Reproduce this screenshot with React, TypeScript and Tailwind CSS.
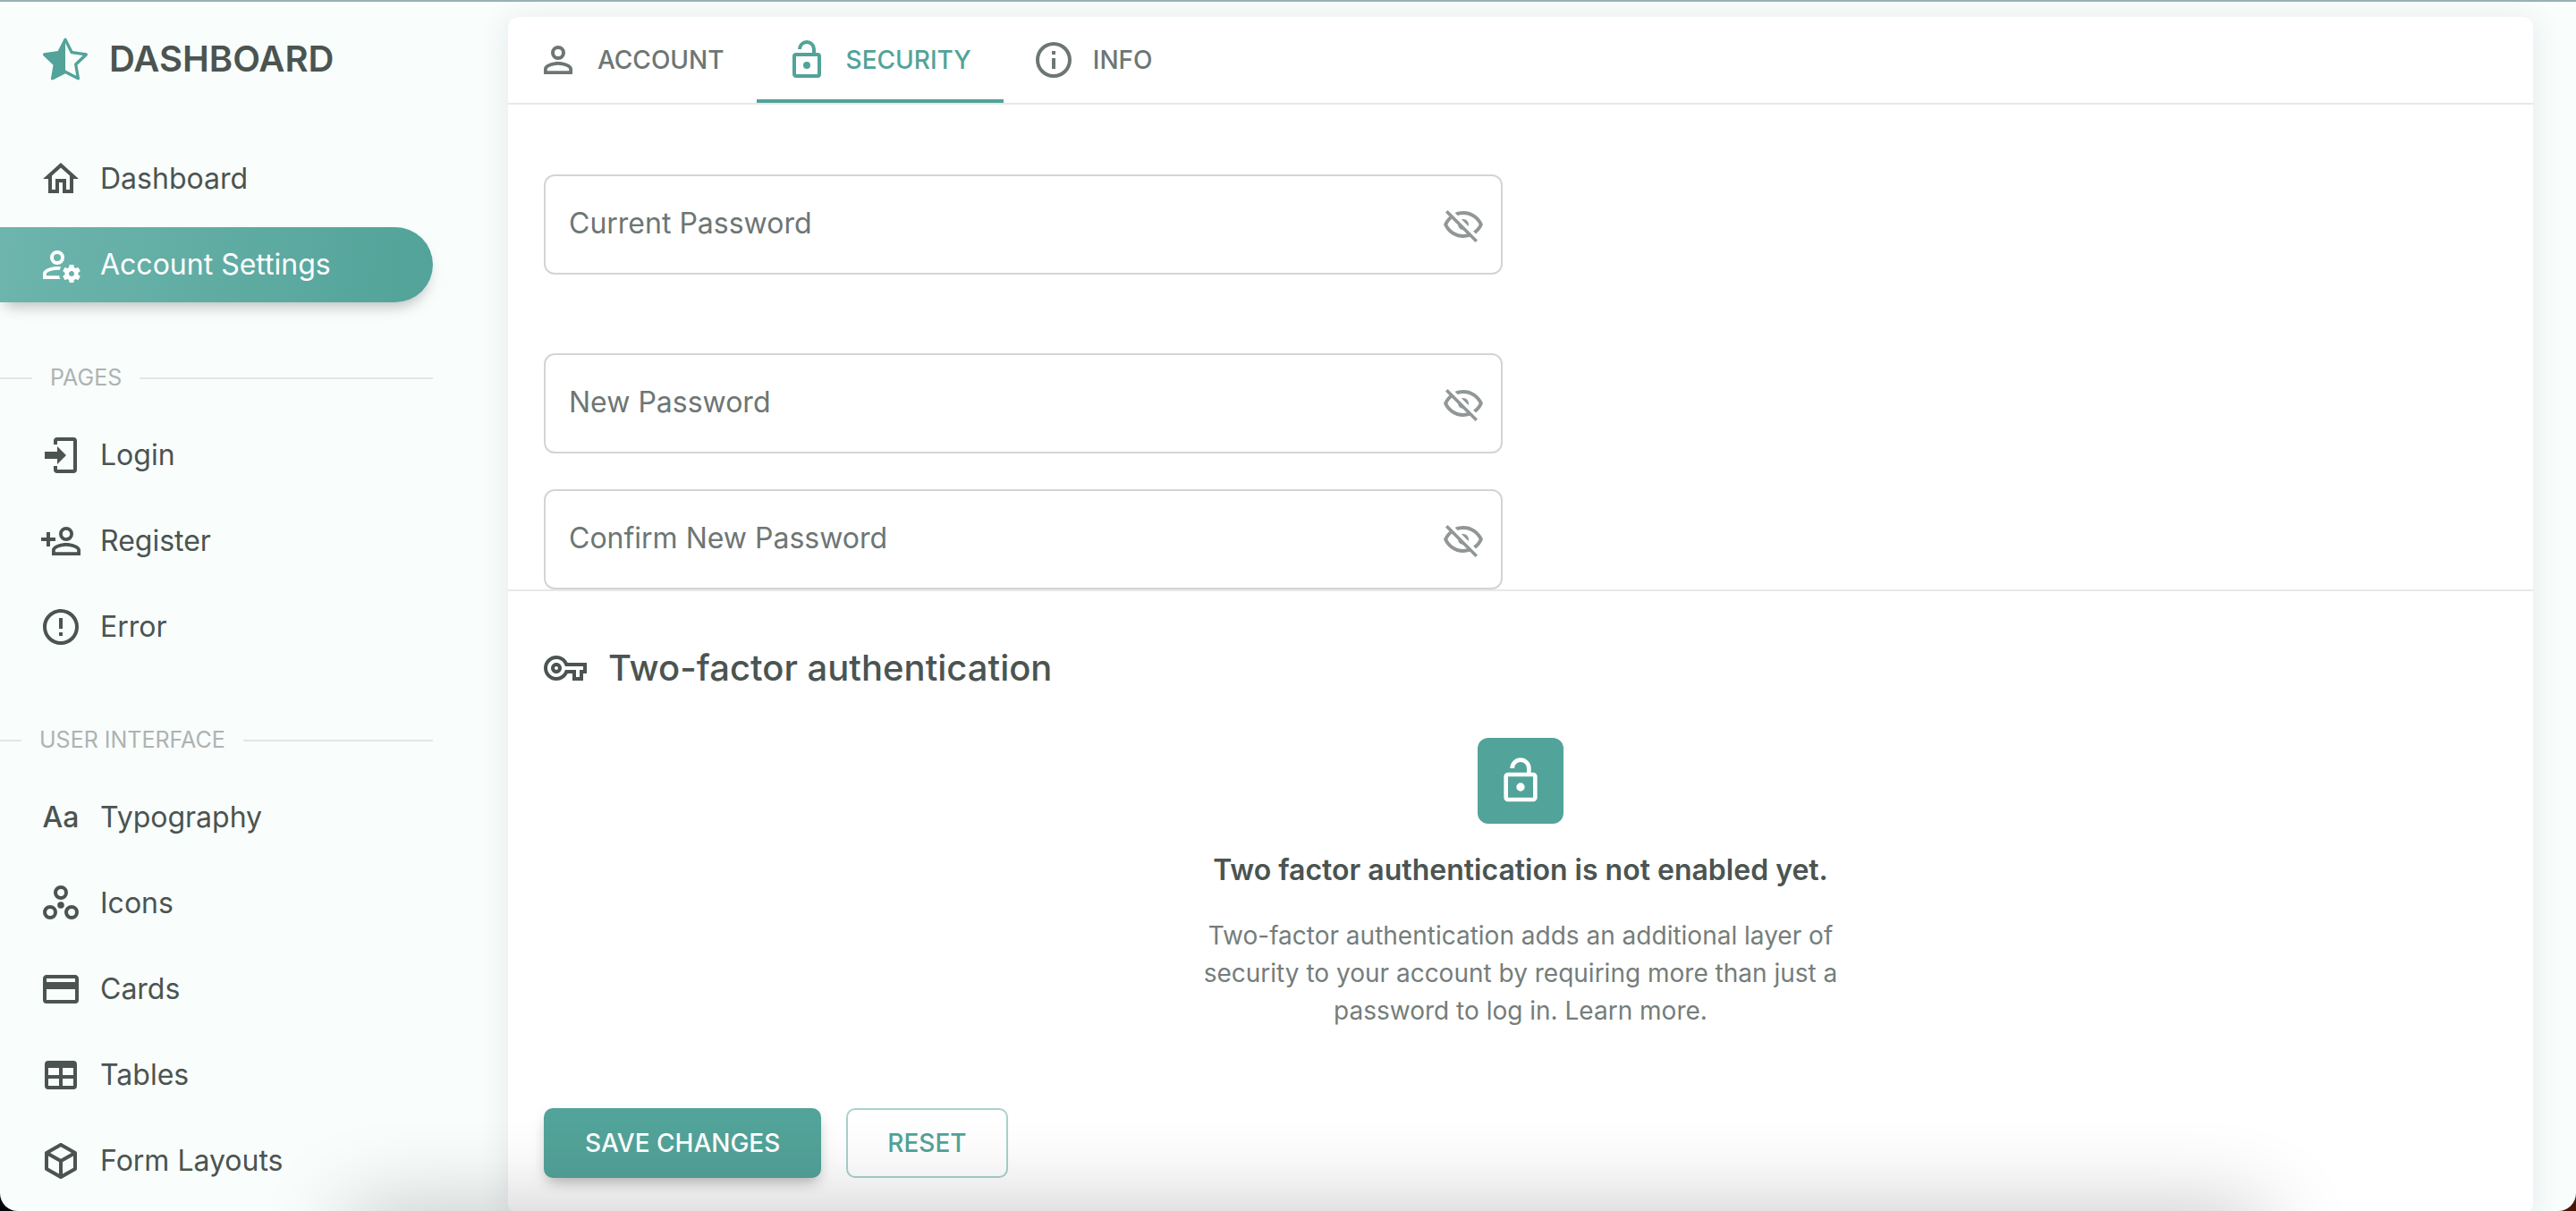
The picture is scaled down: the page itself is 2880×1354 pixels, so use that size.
import { useState } from "react";
import { BsStarHalf } from "react-icons/bs";

const ICONS = {
  home: "M12 5.69L17 10.19V18H15V12H9V18H7V10.19L12 5.69M12 3L2 12H5V20H11V14H13V20H19V12H22",
  accountCog:
    "M10 4A4 4 0 0 0 6 8A4 4 0 0 0 10 12A4 4 0 0 0 14 8A4 4 0 0 0 10 4M10 6A2 2 0 0 1 12 8A2 2 0 0 1 10 10A2 2 0 0 1 8 8A2 2 0 0 1 10 6M17 12C16.84 12 16.76 12.08 16.76 12.24L16.5 13.5C16.28 13.68 15.96 13.84 15.72 14L14.44 13.5C14.36 13.5 14.2 13.5 14.12 13.6L13.16 15.36C13.08 15.44 13.08 15.6 13.24 15.68L14.28 16.5V17.5L13.24 18.32C13.16 18.4 13.08 18.56 13.16 18.64L14.12 20.4C14.2 20.5 14.36 20.5 14.44 20.5L15.72 20C15.96 20.16 16.28 20.32 16.5 20.5L16.76 21.76C16.76 21.92 16.84 22 17 22H19C19.08 22 19.24 21.92 19.24 21.76L19.4 20.5C19.72 20.32 20.04 20.16 20.28 20L21.5 20.5C21.64 20.5 21.8 20.5 21.8 20.4L22.84 18.64C22.92 18.56 22.84 18.4 22.76 18.32L21.72 17.5V16.5L22.76 15.68C22.84 15.6 22.92 15.44 22.84 15.36L21.8 13.6C21.8 13.5 21.64 13.5 21.5 13.5L20.28 14C20.04 13.84 19.72 13.68 19.4 13.5L19.24 12.24C19.24 12.08 19.08 12 19 12H17M10 13C7.33 13 2 14.33 2 17V20H11.67C11.39 19.41 11.19 18.77 11.09 18.1H3.9V17C3.9 16.36 7.03 14.9 10 14.9C10.43 14.9 10.87 14.94 11.3 15C11.5 14.36 11.77 13.76 12.12 13.21C11.34 13.08 10.6 13 10 13M18.04 15.5C18.84 15.5 19.5 16.16 19.5 17.04C19.5 17.84 18.84 18.5 18.04 18.5C17.16 18.5 16.5 17.84 16.5 17.04C16.5 16.16 17.16 15.5 18.04 15.5Z",
  login:
    "M10,17V14H3V10H10V7L15,12L10,17M10,2H19A2,2 0 0,1 21,4V20A2,2 0 0,1 19,22H10A2,2 0 0,1 8,20V18H10V20H19V4H10V6H8V4A2,2 0 0,1 10,2Z",
  accountPlus:
    "M15,4A4,4 0 0,0 11,8A4,4 0 0,0 15,12A4,4 0 0,0 19,8A4,4 0 0,0 15,4M15,5.9C16.16,5.9 17.1,6.84 17.1,8C17.1,9.16 16.16,10.1 15,10.1A2.1,2.1 0 0,1 12.9,8A2.1,2.1 0 0,1 15,5.9M4,7V10H1V12H4V15H6V12H9V10H6V7H4M15,13C12.33,13 7,14.33 7,17V20H23V17C23,14.33 17.67,13 15,13M15,14.9C17.97,14.9 21.1,16.36 21.1,17V18.1H8.9V17C8.9,16.36 12,14.9 15,14.9Z",
  alert:
    "M11,15H13V17H11V15M11,7H13V13H11V7M12,2C6.47,2 2,6.5 2,12A10,10 0 0,0 12,22A10,10 0 0,0 22,12A10,10 0 0,0 12,2M12,20A8,8 0 0,1 4,12A8,8 0 0,1 12,4A8,8 0 0,1 20,12A8,8 0 0,1 12,20Z",
  circles:
    "M18,19C16.89,19 16,18.1 16,17C16,15.89 16.89,15 18,15A2,2 0 0,1 20,17A2,2 0 0,1 18,19M18,13A4,4 0 0,0 14,17A4,4 0 0,0 18,21A4,4 0 0,0 22,17A4,4 0 0,0 18,13M12,11.1A1.9,1.9 0 0,0 10.1,13A1.9,1.9 0 0,0 12,14.9A1.9,1.9 0 0,0 13.9,13A1.9,1.9 0 0,0 12,11.1M6,19C4.89,19 4,18.1 4,17C4,15.89 4.89,15 6,15A2,2 0 0,1 8,17A2,2 0 0,1 6,19M6,13A4,4 0 0,0 2,17A4,4 0 0,0 6,21A4,4 0 0,0 10,17A4,4 0 0,0 6,13M12,4A2,2 0 0,1 14,6A2,2 0 0,1 12,8C10.89,8 10,7.1 10,6C10,4.89 10.89,4 12,4M12,10A4,4 0 0,0 16,6A4,4 0 0,0 12,2A4,4 0 0,0 8,6A4,4 0 0,0 12,10Z",
  card: "M20,8H4V6H20M20,18H4V12H20M20,4H4C2.89,4 2,4.89 2,6V18A2,2 0 0,0 4,20H20A2,2 0 0,0 22,18V6C22,4.89 21.1,4 20,4Z",
  table:
    "M5,4H19A2,2 0 0,1 21,6V18A2,2 0 0,1 19,20H5A2,2 0 0,1 3,18V6A2,2 0 0,1 5,4M5,8V12H11V8H5M13,8V12H19V8H13M5,14V18H11V14H5M13,14V18H19V14H13Z",
  cube: "M21,16.5C21,16.88 20.79,17.21 20.47,17.38L12.57,21.82C12.41,21.94 12.21,22 12,22C11.79,22 11.59,21.94 11.43,21.82L3.53,17.38C3.21,17.21 3,16.88 3,16.5V7.5C3,7.12 3.21,6.79 3.53,6.62L11.43,2.18C11.59,2.06 11.79,2 12,2C12.21,2 12.41,2.06 12.57,2.18L20.47,6.62C20.79,6.79 21,7.12 21,7.5V16.5M12,4.15L6.04,7.5L12,10.85L17.96,7.5L12,4.15M5,15.91L11,19.29V12.58L5,9.21V15.91M19,15.91V9.21L13,12.58V19.29L19,15.91Z",
  account:
    "M12,4A4,4 0 0,1 16,8A4,4 0 0,1 12,12A4,4 0 0,1 8,8A4,4 0 0,1 12,4M12,6A2,2 0 0,0 10,8A2,2 0 0,0 12,10A2,2 0 0,0 14,8A2,2 0 0,0 12,6M12,13C14.67,13 20,14.33 20,17V20H4V17C4,14.33 9.33,13 12,13M12,14.9C9.03,14.9 5.9,16.36 5.9,17V18.1H18.1V17C18.1,16.36 14.97,14.9 12,14.9Z",
  lockOpen:
    "M18,20V10H6V20H18M18,8A2,2 0 0,1 20,10V20A2,2 0 0,1 18,22H6C4.89,22 4,21.1 4,20V10A2,2 0 0,1 6,8H15V6A3,3 0 0,0 12,3A3,3 0 0,0 9,6H7A5,5 0 0,1 12,1A5,5 0 0,1 17,6V8H18M12,17A2,2 0 0,1 10,15A2,2 0 0,1 12,13A2,2 0 0,1 14,15A2,2 0 0,1 12,17Z",
  info: "M11,9H13V7H11M12,20C7.59,20 4,16.41 4,12C4,7.59 7.59,4 12,4C16.41,4 20,7.59 20,12C20,16.41 16.41,20 12,20M12,2A10,10 0 0,0 2,12A10,10 0 0,0 12,22A10,10 0 0,0 22,12A10,10 0 0,0 12,2M11,17H13V11H11V17Z",
  eyeOff:
    "M2,5.27L3.28,4L20,20.72L18.73,22L15.65,18.92C14.5,19.3 13.28,19.5 12,19.5C7,19.5 2.73,16.39 1,12C1.69,10.24 2.79,8.69 4.19,7.46L2,5.27M12,9A3,3 0 0,1 15,12C15,12.35 14.94,12.69 14.83,13L11,9.17C11.31,9.06 11.65,9 12,9M12,4.5C17,4.5 21.27,7.61 23,12C22.18,14.08 20.79,15.88 19,17.19L17.58,15.76C18.94,14.82 20.06,13.54 20.82,12C19.17,8.64 15.76,6.5 12,6.5C10.91,6.5 9.84,6.68 8.84,7L7.3,5.47C8.74,4.85 10.33,4.5 12,4.5M3.18,12C4.83,15.36 8.24,17.5 12,17.5C12.69,17.5 13.37,17.43 14,17.29L11.72,15C10.29,14.85 9.15,13.71 9,12.28L5.6,8.87C4.61,9.72 3.78,10.78 3.18,12Z",
  key: "M22 19H16V15H13.32C12.18 17.42 9.72 19 7 19C3.14 19 0 15.86 0 12S3.14 5 7 5C9.72 5 12.17 6.58 13.32 9H24V15H22V19M18 17H20V13H22V11H11.94L11.71 10.33C11 8.34 9.11 7 7 7C4.24 7 2 9.24 2 12S4.24 17 7 17C9.11 17 11 15.66 11.71 13.67L11.94 13H18V17M7 15C5.35 15 4 13.65 4 12S5.35 9 7 9 10 10.35 10 12 8.65 15 7 15M7 11C6.45 11 6 11.45 6 12S6.45 13 7 13 8 12.55 8 12 7.55 11 7 11Z",
};

type IconName = keyof typeof ICONS;

function Icon({ name, className = "size-12" }: { name: IconName; className?: string }) {
  return (
    <svg viewBox="0 0 24 24" fill="currentColor" aria-hidden="true" className={`shrink-0 ${className}`}>
      <path d={ICONS[name]} />
    </svg>
  );
}

function NavItem({ icon, label, active = false }: { icon?: IconName; label: string; active?: boolean }) {
  return (
    <li className="mt-3">
      <a
        href="#"
        aria-current={active ? "page" : undefined}
        className={`flex h-[84px] items-center gap-5 rounded-r-full pl-11 text-[32px] ${
          active
            ? "bg-linear-98 from-[#6db5ad] to-[#52a399] text-white shadow-[0_10px_16px_-6px_rgba(58,65,62,0.35)]"
            : "text-[#4b5451]"
        }`}
      >
        {icon ? (
          <Icon name={icon} />
        ) : (
          <span aria-hidden="true" className="w-12 text-center font-medium">
            Aa
          </span>
        )}
        <span>{label}</span>
      </a>
    </li>
  );
}

function SectionTitle({ label, lead }: { label: string; lead: string }) {
  return (
    <div className="mt-16 mb-6 flex h-[41px] items-center gap-5 text-[25px] text-[#aeb3b2]">
      <span className={`h-0.5 bg-[#e2e6e5] ${lead}`} />
      <h2>{label}</h2>
      <span className="h-0.5 flex-1 bg-[#e2e6e5]" />
    </div>
  );
}

function Tab({
  icon,
  label,
  active,
  onSelect,
}: {
  icon: IconName;
  label: string;
  active: boolean;
  onSelect: () => void;
}) {
  return (
    <button
      type="button"
      role="tab"
      aria-selected={active}
      onClick={onSelect}
      className={`flex h-24 items-center gap-5 border-b-4 pt-1 pr-9 pl-8 text-[28px] font-medium ${
        active ? "border-[#52a399] text-[#52a399]" : "border-transparent text-[#6d7674]"
      }`}
    >
      <Icon name={icon} />
      {label}
    </button>
  );
}

function PasswordField({ id, label }: { id: string; label: string }) {
  const [shown, setShown] = useState(false);
  return (
    <div className="flex h-28 items-center rounded-xl border-2 border-[#d3d5d5] pr-[18px] pl-[26px] text-[32px]">
      <div className="grid h-full min-w-0 flex-1 items-center">
        <input
          id={id}
          type={shown ? "text" : "password"}
          placeholder=" "
          className="peer col-start-1 row-start-1 h-full w-full bg-transparent text-[#4b5451] outline-none"
        />
        <label
          htmlFor={id}
          className="pointer-events-none col-start-1 row-start-1 pb-0.5 text-[#6d7674] peer-not-placeholder-shown:invisible"
        >
          {label}
        </label>
      </div>
      <button
        type="button"
        aria-label={`Toggle ${label} visibility`}
        onClick={() => setShown(!shown)}
        className="text-[#909796]"
      >
        <Icon name="eyeOff" />
      </button>
    </div>
  );
}

const TABS: { icon: IconName; label: string }[] = [
  { icon: "account", label: "ACCOUNT" },
  { icon: "lockOpen", label: "SECURITY" },
  { icon: "info", label: "INFO" },
];

export default function App() {
  const [tab, setTab] = useState("SECURITY");

  return (
    <div className="h-screen bg-linear-to-r from-[#02060c] to-[#4a1408]">
      <div className="relative flex h-screen overflow-hidden rounded-b-[20px] border-t-2 border-[#99b1b4] bg-[#f9fdfc] font-['Inter',sans-serif] text-[#4b5451]">
        <aside className="w-[520px] shrink-0 pr-9">
          <div className="flex h-36 items-center gap-6 pb-4 pl-12">
            <BsStarHalf aria-hidden="true" className="size-[50px] shrink-0 text-[#52a399]" />
            <span className="text-[40px] font-semibold">DASHBOARD</span>
          </div>
          <nav aria-label="Main">
            <ul>
              <NavItem icon="home" label="Dashboard" />
              <NavItem icon="accountCog" label="Account Settings" active />
            </ul>
            <SectionTitle label="PAGES" lead="w-9" />
            <ul>
              <NavItem icon="login" label="Login" />
              <NavItem icon="accountPlus" label="Register" />
              <NavItem icon="alert" label="Error" />
            </ul>
            <SectionTitle label="USER INTERFACE" lead="w-6" />
            <ul>
              <NavItem label="Typography" />
              <NavItem icon="circles" label="Icons" />
              <NavItem icon="card" label="Cards" />
              <NavItem icon="table" label="Tables" />
              <NavItem icon="cube" label="Form Layouts" />
            </ul>
          </nav>
        </aside>

        <main className="min-w-0 flex-1 px-12 pt-[17px]">
          <div className="rounded-xl bg-white pb-10 shadow-[0_4px_32px_rgba(70,90,110,0.13)]">
            <div role="tablist" aria-label="Account settings" className="flex border-b-2 border-[#e7e9e9]">
              {TABS.map((t) => (
                <Tab key={t.label} {...t} active={tab === t.label} onSelect={() => setTab(t.label)} />
              ))}
            </div>

            <form onSubmit={(e) => e.preventDefault()}>
              <div className="grid grid-cols-2 gap-10 px-10 pt-[78px]">
                <div className="flex flex-col">
                  <PasswordField id="current-password" label="Current Password" />
                  <div className="mt-[88px] flex flex-col gap-10">
                    <PasswordField id="new-password" label="New Password" />
                    <PasswordField id="confirm-password" label="Confirm New Password" />
                  </div>
                </div>
              </div>

              <hr className="border-t-2 border-[#e7e9e9]" />

              <div className="px-10 pt-14">
                <div className="flex h-[60px] items-center gap-6">
                  <Icon name="key" />
                  <h2 className="text-[40px] font-medium">Two-factor authentication</h2>
                </div>
                <div className="mx-auto mt-12 flex w-[736px] max-w-full flex-col items-center text-center">
                  <div className="flex size-24 items-center justify-center rounded-xl bg-[#52a399] text-white">
                    <Icon name="lockOpen" className="size-14" />
                  </div>
                  <h3 className="mt-7 text-[32px] leading-[48px] font-semibold">
                    Two factor authentication is not enabled yet.
                  </h3>
                  <p className="mt-7 text-[28px] leading-[42px] text-[#757d7b]">
                    Two-factor authentication adds an additional layer of security to your account by requiring more
                    than just a password to log in. Learn more.
                  </p>
                </div>
                <div className="mt-[88px] flex gap-7">
                  <button
                    type="submit"
                    className="h-[78px] rounded-[10px] bg-[#52a399] px-[46px] text-[28px] font-medium text-white shadow-[0_8px_16px_-4px_rgba(58,65,62,0.4)]"
                  >
                    SAVE CHANGES
                  </button>
                  <button
                    type="reset"
                    className="h-[78px] rounded-[10px] border-2 border-[#a8d1cc] px-11 text-[28px] font-medium text-[#52a399]"
                  >
                    RESET
                  </button>
                </div>
              </div>
            </form>
          </div>
        </main>

        <div
          aria-hidden="true"
          className="pointer-events-none absolute top-full right-[350px] left-[390px] h-24 shadow-[0_0_100px_rgba(0,0,0,0.24)]"
        />
      </div>
    </div>
  );
}
